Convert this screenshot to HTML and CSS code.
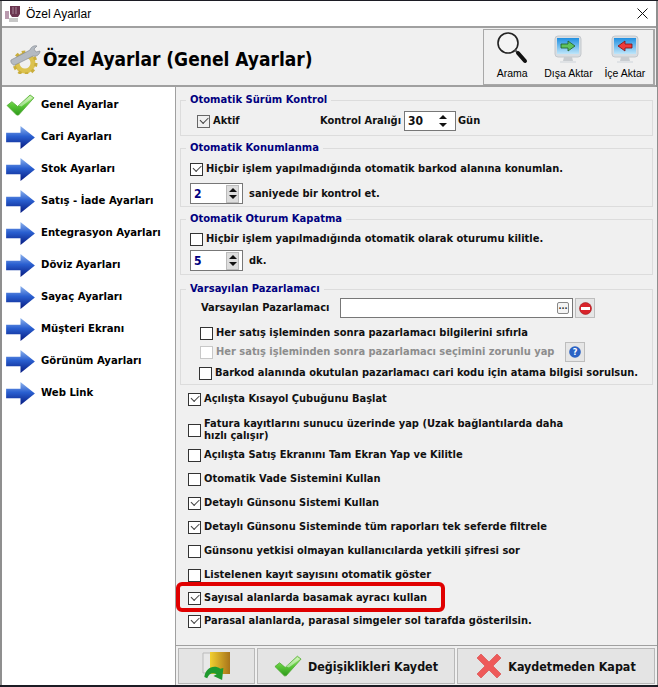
FILE: index.html
```html
<!DOCTYPE html>
<html lang="tr">
<head>
    <meta charset="UTF-8">
    <title>Özel Ayarlar</title>
    <link rel="stylesheet" href="styles.css">
</head>
<body>
<svg class="defs" width="0" height="0">
    <defs>
        <linearGradient id="blue" x1="0" y1="0" x2="0" y2="1">
            <stop offset="0" stop-color="#8fb4ee"/>
            <stop offset="0.45" stop-color="#2a5fd0"/>
            <stop offset="1" stop-color="#061a80"/>
        </linearGradient>
        <linearGradient id="green" x1="0" y1="0" x2="0" y2="1">
            <stop offset="0" stop-color="#b5ee8a"/>
            <stop offset="0.5" stop-color="#5cc93a"/>
            <stop offset="1" stop-color="#2f9a1c"/>
        </linearGradient>
        <linearGradient id="screen" x1="0" y1="0" x2="0" y2="1">
            <stop offset="0" stop-color="#1f8fe0"/>
            <stop offset="1" stop-color="#bfe6fa"/>
        </linearGradient>
        <linearGradient id="door" x1="0" y1="0" x2="1" y2="0">
            <stop offset="0" stop-color="#f2d030"/>
            <stop offset="1" stop-color="#a8741a"/>
        </linearGradient>
        <symbol id="arrow" viewBox="0 0 30 24">
            <path d="M0 7h15V0l15 12-15 12v-7H0z" fill="url(#blue)"/>
        </symbol>
        <symbol id="check" viewBox="0 0 30 24">
            <path d="M1 12l5-4 6 5L25 1l4 3-16 18h-2z" fill="url(#green)" stroke="#4aa82c" stroke-width="0.8"/>
            <path d="M13 12L25 2l3 2-12 9z" fill="#fff" opacity="0.45"/>
        </symbol>
        <symbol id="monitor" viewBox="0 0 28 30">
            <rect x="1" y="1" width="26" height="21" rx="3" fill="#d8dde2" stroke="#c4c8cc"/>
            <rect x="3" y="3" width="22" height="16" fill="url(#screen)"/>
            <path d="M10 22h8l1 4h-10z" fill="#c8ccd0"/>
            <path d="M6 26h16v2H6z" fill="#dfe2e5"/>
        </symbol>
    </defs>
</svg>

<div class="window">
    <div class="titlebar">
        <svg class="app-icon" width="18" height="18" viewBox="0 0 18 18">
            <path d="M6 1h10v8l-2 3H8L6 9z" fill="#6b3550"/>
            <path d="M9 2v7M12 2v7" stroke="#a98a9a"/>
            <rect x="1" y="6" width="4" height="8" fill="#b99aae"/>
            <rect x="5" y="13" width="9" height="4" fill="#c8c8c8"/>
        </svg>
        <span class="title-text">Özel Ayarlar</span>
        <svg class="close-icon" width="11" height="11" viewBox="0 0 11 11">
            <path d="M.5.5l10 10M10.5.5l-10 10" stroke="#111" fill="none"/>
        </svg>
    </div>

    <div class="header">
        <svg class="gear" width="34" height="30" viewBox="0 0 34 30">
            <circle cx="17" cy="19" r="8" fill="none" stroke="#dcc24e" stroke-width="5"/>
            <circle cx="17" cy="19" r="11" fill="none" stroke="#c9ad3c" stroke-width="3" stroke-dasharray="3.5 3.4"/>
            <path d="M3 16L22 6c1-3 4-5 7-4l-3 3 2 3 4-1c0 3-3 6-7 5L7 21c-2 1-5-3-4-5z" fill="#b4bac2" stroke="#7d838b" stroke-width="0.6"/>
        </svg>
        <h1 class="header-title">Özel Ayarlar (Genel Ayarlar)</h1>
        <div class="toolbar">
            <div class="tool">
                <svg width="32" height="34" viewBox="0 0 32 34">
                    <circle cx="12" cy="12" r="10" fill="#f4f4f4" stroke="#222" stroke-width="1.6"/>
                    <path d="M19 19l3 3" stroke="#555" stroke-width="2"/>
                    <path d="M22 22l7 8" stroke="#111" stroke-width="4" stroke-linecap="round"/>
                </svg>
                <span>Arama</span>
            </div>
            <div class="tool">
                <svg width="28" height="30" viewBox="0 0 28 30">
                    <use href="#monitor"/>
                    <path d="M7 9h7V6l7 5-7 5v-3H7z" fill="#5fc35f" stroke="#1d5e24" stroke-width="0.8"/>
                </svg>
                <span>Dışa Aktar</span>
            </div>
            <div class="tool">
                <svg width="28" height="30" viewBox="0 0 28 30">
                    <use href="#monitor"/>
                    <path d="M21 9h-7V6l-7 5 7 5v-3h7z" fill="#ee3b3b" stroke="#7c1212" stroke-width="0.8"/>
                </svg>
                <span>İçe Aktar</span>
            </div>
        </div>
    </div>

    <div class="content">
        <div class="sidebar">
            <div class="nav-item"><svg width="29" height="23"><use href="#check"/></svg>Genel Ayarlar</div>
            <div class="nav-item"><svg width="29" height="23"><use href="#arrow"/></svg>Cari Ayarları</div>
            <div class="nav-item"><svg width="29" height="23"><use href="#arrow"/></svg>Stok Ayarları</div>
            <div class="nav-item"><svg width="29" height="23"><use href="#arrow"/></svg>Satış - İade Ayarları</div>
            <div class="nav-item"><svg width="29" height="23"><use href="#arrow"/></svg>Entegrasyon Ayarları</div>
            <div class="nav-item"><svg width="29" height="23"><use href="#arrow"/></svg>Döviz Ayarları</div>
            <div class="nav-item"><svg width="29" height="23"><use href="#arrow"/></svg>Sayaç Ayarları</div>
            <div class="nav-item"><svg width="29" height="23"><use href="#arrow"/></svg>Müşteri Ekranı</div>
            <div class="nav-item"><svg width="29" height="23"><use href="#arrow"/></svg>Görünüm Ayarları</div>
            <div class="nav-item"><svg width="29" height="23"><use href="#arrow"/></svg>Web Link</div>
        </div>

        <div class="main">
            <div class="settings">
                <fieldset class="group group-version">
                    <legend>Otomatik Sürüm Kontrol</legend>
                    <div class="row version-row">
                        <label class="check-label active-check"><span class="box checked"></span>Aktif</label>
                        <span class="interval-label">Kontrol Aralığı</span>
                        <span class="spin spin-wide">30<span class="spin-btns plain"><i class="up"></i><i class="down"></i></span></span>
                        <span>Gün</span>
                    </div>
                </fieldset>

                <fieldset class="group group-location">
                    <legend>Otomatik Konumlanma</legend>
                    <label class="check-label"><span class="box checked"></span>Hiçbir işlem yapılmadığında otomatik barkod alanına konumlan.</label>
                    <div class="row spin-row">
                        <span class="spin blue-val">2<span class="spin-btns"><i class="up"></i><i class="down"></i></span></span>
                        <span>saniyede bir kontrol et.</span>
                    </div>
                </fieldset>

                <fieldset class="group group-session">
                    <legend>Otomatik Oturum Kapatma</legend>
                    <label class="check-label"><span class="box"></span>Hiçbir işlem yapılmadığında otomatik olarak oturumu kilitle.</label>
                    <div class="row spin-row session-spin">
                        <span class="spin blue-val">5<span class="spin-btns"><i class="up"></i><i class="down"></i></span></span>
                        <span>dk.</span>
                    </div>
                </fieldset>

                <fieldset class="group group-seller">
                    <legend>Varsayılan Pazarlamacı</legend>
                    <div class="row seller-row">
                        <span class="seller-label">Varsayılan Pazarlamacı</span>
                        <span class="seller-input"><span class="dots">...</span></span>
                        <span class="square-btn">
                            <svg width="13" height="13" viewBox="0 0 13 13">
                                <circle cx="6.5" cy="6.5" r="6" fill="#d8232a" stroke="#9c1c20" stroke-width="0.6"/>
                                <rect x="2" y="5" width="9" height="3" fill="#fff"/>
                            </svg>
                        </span>
                    </div>
                    <label class="check-label seller-check seller-first"><span class="box"></span>Her satış işleminden sonra pazarlamacı bilgilerini sıfırla</label>
                    <div class="row seller-check disabled-row">
                        <label class="check-label disabled"><span class="box"></span>Her satış işleminden sonra pazarlamacı seçimini zorunlu yap</label>
                        <span class="square-btn">
                            <svg width="12" height="12" viewBox="0 0 12 12">
                                <circle cx="6" cy="6" r="5.8" fill="#2a62c4"/>
                                <text x="6" y="9.4" class="help-mark">?</text>
                            </svg>
                        </span>
                    </div>
                    <label class="check-label seller-check seller-last"><span class="box"></span>Barkod alanında okutulan pazarlamacı cari kodu için atama bilgisi sorulsun.</label>
                </fieldset>

                <div class="options">
                    <label class="check-label opt"><span class="box checked"></span>Açılışta Kısayol Çubuğunu Başlat</label>
                    <label class="check-label opt opt-two"><span class="box"></span><span>Fatura kayıtlarını sunucu üzerinde yap (Uzak bağlantılarda daha<br>hızlı çalışır)</span></label>
                    <label class="check-label opt"><span class="box"></span>Açılışta Satış Ekranını Tam Ekran Yap ve Kilitle</label>
                    <label class="check-label opt"><span class="box"></span>Otomatik Vade Sistemini Kullan</label>
                    <label class="check-label opt"><span class="box checked"></span>Detaylı Günsonu Sistemi Kullan</label>
                    <label class="check-label opt"><span class="box checked"></span>Detaylı Günsonu Sisteminde tüm raporları tek seferde filtrele</label>
                    <label class="check-label opt"><span class="box"></span>Günsonu yetkisi olmayan kullanıcılarda yetkili şifresi sor</label>
                    <label class="check-label opt"><span class="box"></span>Listelenen kayıt sayısını otomatik göster</label>
                    <div class="highlight">
                        <label class="check-label"><span class="box checked"></span>Sayısal alanlarda basamak ayracı kullan</label>
                    </div>
                    <label class="check-label opt opt-last"><span class="box checked"></span>Parasal alanlarda, parasal simgeler sol tarafda gösterilsin.</label>
                </div>
            </div>

            <div class="footer">
                <button class="foot-btn foot-back">
                    <svg width="30" height="30" viewBox="0 0 30 30">
                        <path d="M1 2h8v20H1z" fill="#e8e8e8" stroke="#bbb"/>
                        <path d="M8 1h20v22H8z" fill="url(#door)"/>
                        <path d="M3 27c0-9 8-14 15-10l3-1v12l-9-3 3-2c-4-2-8 0-9 5z" fill="#1f9a2e" transform="rotate(6 12 20)"/>
                    </svg>
                </button>
                <button class="foot-btn"><svg width="28" height="23"><use href="#check"/></svg>Değişiklikleri Kaydet</button>
                <button class="foot-btn">
                    <svg width="26" height="26" viewBox="0 0 26 26">
                        <path d="M5 1l8 8 8-8 4 4-8 8 8 8-4 4-8-8-8 8-4-4 8-8-8-8z" fill="#ee5a5a" stroke="#d94545" stroke-width="0.6"/>
                    </svg>
                    Kaydetmeden Kapat
                </button>
            </div>
        </div>
    </div>
</div>
</body>
</html>
```

FILE: styles.css
```css
body {
    margin: 0;
    background: #1c1c24;
    font-family: "DejaVu Sans Condensed", "DejaVu Sans", sans-serif;
    font-size: 11px;
    line-height: 14px;
    color: #000;
}
.defs {
    position: absolute;
}
.window {
    width: 654px;
    height: 684px;
    margin-top: 1px;
    background: #fff;
    border-left: 2px solid #8f8f8f;
    border-right: 2px solid #8f8f8f;
    display: flex;
    flex-direction: column;
}

/* title bar */
.titlebar {
    height: 25px;
    display: flex;
    align-items: center;
    padding: 0 8px 0 2px;
    border-bottom: 2px solid #a0a0a0;
    flex: none;
}
.app-icon {
    margin-right: 4px;
}
.title-text {
    font-family: "Liberation Sans", sans-serif;
    font-size: 12px;
    flex: 1;
}

/* header */
.header {
    height: 57px;
    flex: none;
    background: #f0f0f0;
    border-bottom: 2px solid #a0a0a0;
    display: flex;
    align-items: center;
    padding-left: 6px;
}
.gear {
    margin: 4px 1px 0 0;
    flex: none;
}
.header-title {
    margin: 4px 0 0;
    font-size: 19px;
    line-height: 24px;
    font-weight: bold;
    flex: 1;
}
.toolbar {
    width: 169px;
    height: 54px;
    border: 1px solid #a8a8a8;
    border-right-width: 2px;
    margin-right: 1px;
    display: flex;
    font-family: "Liberation Sans", sans-serif;
    font-size: 10.5px;
}
.tool {
    flex: 1;
    display: flex;
    flex-direction: column;
    align-items: center;
    justify-content: flex-end;
    padding-bottom: 4px;
    white-space: nowrap;
}
.tool svg {
    margin-bottom: 1px;
}

/* layout */
.content {
    flex: 1;
    display: flex;
    min-height: 0;
}
.sidebar {
    width: 173px;
    flex: none;
    border-right: 1px solid #a0a0a0;
    padding-top: 2px;
    font-size: 11.25px;
    font-weight: bold;
}
.nav-item {
    height: 32px;
    display: flex;
    align-items: center;
    gap: 6px;
    padding-left: 4px;
    white-space: nowrap;
}
.main {
    flex: 1;
    background: #f0f0f0;
    display: flex;
    flex-direction: column;
    font-weight: bold;
    color: #111;
}
.settings {
    flex: 1;
    padding: 6px 4px 0 4px;
}

/* groups */
.group {
    box-sizing: border-box;
    margin: 0;
    padding: 0 0 0 9px;
    border: 1px solid #dcdcdc;
    min-width: 0;
}
.group legend {
    color: #00007f;
    padding: 0 4px;
    margin-left: -4px;
    font-size: 11.1px;
}
.group-version {
    height: 43px;
    margin-bottom: 5px;
}
.group-location {
    height: 66px;
    margin-bottom: 5px;
    padding-top: 7px;
}
.group-session {
    height: 63px;
    margin-bottom: 7px;
    padding-top: 6px;
}
.group-seller {
    height: 103px;
    padding-top: 2px;
}
.row {
    display: flex;
    align-items: center;
}
.check-label {
    display: flex;
    align-items: center;
    gap: 3px;
    white-space: nowrap;
}
.box {
    width: 11px;
    height: 11px;
    border: 1px solid #333;
    background: #fff;
    flex: none;
    position: relative;
}
.box.checked::after {
    content: "";
    position: absolute;
    left: 2px;
    top: 1px;
    width: 7px;
    height: 3.5px;
    border-left: 1.3px solid #444;
    border-bottom: 1.3px solid #444;
    transform: rotate(-45deg);
}
.version-row {
    padding: 4px 0 0 7px;
}
.active-check {
    width: 123px;
}
.active-check .box {
    background: #f0f0f0;
    border-color: #666;
}
.interval-label {
    width: 84px;
}
.spin {
    width: 53px;
    height: 21px;
    box-sizing: border-box;
    border: 1px solid #777;
    background: #fff;
    display: flex;
    align-items: center;
    justify-content: space-between;
    padding-left: 3px;
    margin-right: 6px;
    font-size: 12px;
}
.spin-wide {
    width: 52px;
    height: 20px;
    margin-right: 2px;
}
.blue-val {
    color: #00007f;
}
.spin-btns {
    width: 13px;
    height: 18px;
    margin-right: 3px;
    background: #ddd;
    border: 1px solid #bbb;
    box-sizing: border-box;
    display: flex;
    flex-direction: column;
    align-items: center;
    justify-content: space-evenly;
}
.spin-btns.plain {
    background: #fff;
    border: none;
    margin-right: 6px;
}
.up,
.down {
    width: 0;
    height: 0;
    border-left: 4px solid transparent;
    border-right: 4px solid transparent;
}
.up {
    border-bottom: 4px solid #111;
}
.down {
    border-top: 4px solid #111;
}
.spin-row {
    margin-top: 7px;
}
.session-spin {
    margin-top: 4px;
}

/* seller group */
.seller-row {
    padding-left: 11px;
    height: 20px;
}
.seller-label {
    width: 139px;
}
.seller-input {
    width: 233px;
    height: 20px;
    box-sizing: border-box;
    border: 1px solid #777;
    background: #fff;
    display: flex;
    align-items: center;
    justify-content: flex-end;
    padding-right: 3px;
    margin-right: 2px;
}
.dots {
    width: 10px;
    height: 10px;
    border: 1px solid #888;
    border-radius: 2px;
    font-size: 9px;
    line-height: 7px;
    text-align: center;
    color: #333;
    background: #f4f4f4;
}
.square-btn {
    width: 20px;
    height: 20px;
    box-sizing: border-box;
    border: 1px solid #bdbdbd;
    background: #e6e6e6;
    display: flex;
    align-items: center;
    justify-content: center;
}
.help-mark {
    fill: #fff;
    font-size: 9px;
    text-anchor: middle;
}
.seller-check {
    margin: 2px 0 0 10px;
}
.seller-first {
    margin-top: 8px;
}
.disabled-row {
    gap: 10px;
}
.disabled {
    width: 355px;
    color: #8d8d8d;
}
.disabled .box {
    border-color: #c8c8c8;
}
.seller-last {
    margin: 4px 0 0 9px;
}

/* options */
.options {
    margin-top: 2px;
    padding-left: 8px;
}
.opt {
    height: 24px;
}
.opt-two {
    height: 32px;
    padding-top: 6px;
    box-sizing: border-box;
    line-height: 12px;
}
.highlight {
    width: 269px;
    height: 30px;
    box-sizing: border-box;
    margin: -5px 0 0 -12px;
    padding: 2px 0 0 8px;
    border: 4px solid #e00000;
    border-radius: 6px;
    display: flex;
    align-items: center;
}
.opt-last {
    height: 18px;
}

/* footer */
.footer {
    flex: none;
    height: 40px;
    box-sizing: border-box;
    border-top: 1px solid #a0a0a0;
    padding: 2px 2px 0 2px;
    display: flex;
    gap: 2px;
}
.foot-btn {
    width: 198px;
    height: 36px;
    border: 1px solid #b8b8b8;
    background: #e4e4e4;
    display: flex;
    align-items: center;
    justify-content: center;
    gap: 6px;
    font-family: "DejaVu Sans Condensed", "DejaVu Sans", sans-serif;
    font-size: 12.4px;
    font-weight: bold;
    color: #111;
    padding: 0;
}
.foot-back {
    width: 77px;
}
```
